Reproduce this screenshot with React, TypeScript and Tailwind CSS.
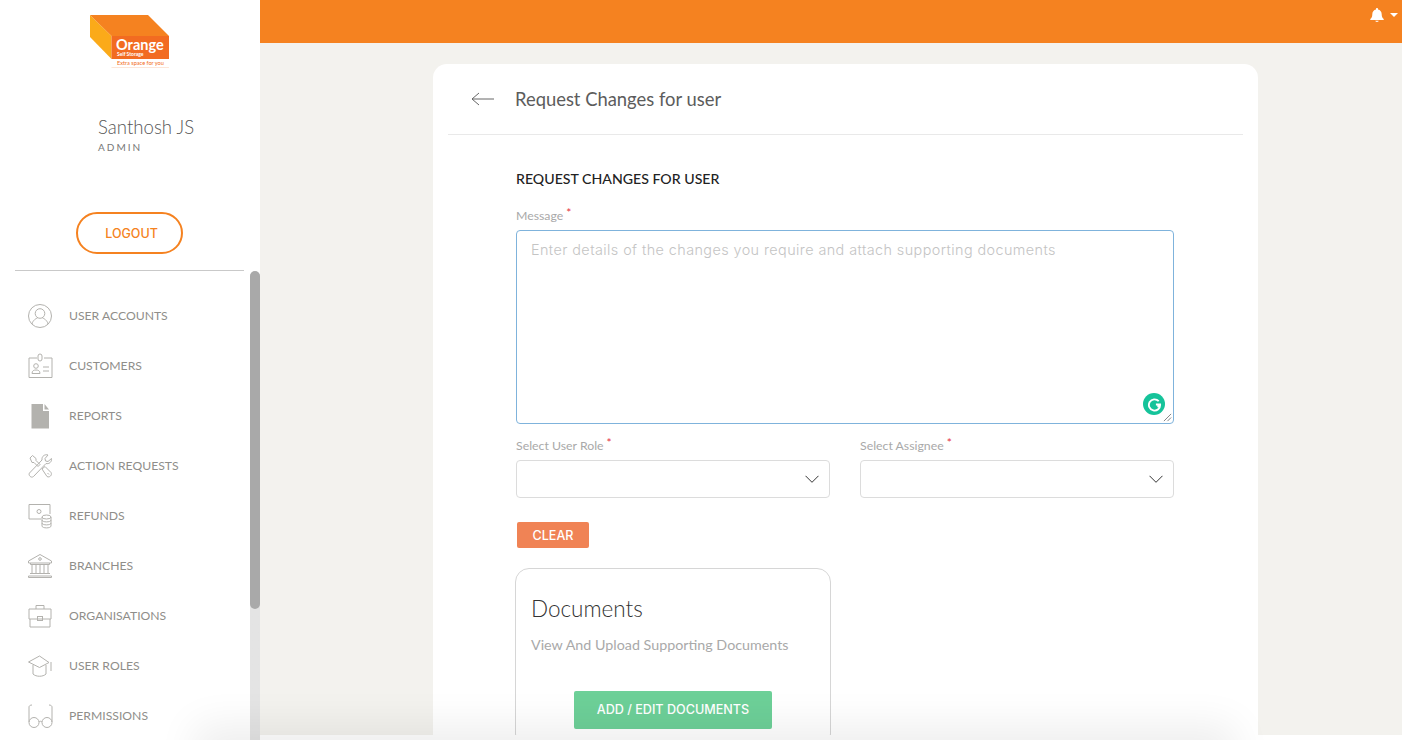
import type { ReactNode } from 'react';

const ICON = 'h-[26px] w-[26px] fill-none stroke-[#b3b2ae]';

const NAV: { label: string; icon: ReactNode }[] = [
  {
    label: 'USER ACCOUNTS',
    icon: (
      <svg viewBox="0 0 26 26" className={ICON} strokeWidth="1">
        <circle cx="13" cy="13" r="11.5" />
        <circle cx="13" cy="10.5" r="4.8" />
        <path d="M5 21c1-4 4-5.5 5.5-6M21 21c-1-4-4-5.500-5.500-6" />
      </svg>
    ),
  },
  {
    label: 'CUSTOMERS',
    icon: (
      <svg viewBox="0 0 26 26" className={ICON} strokeWidth="1">
        <path d="M10 5H2v19.500h23V5h-8" />
        <rect x="11" y="1" width="4" height="7" rx="2" />
        <circle cx="9" cy="13" r="2.300" />
        <path d="M5 20.500c0-3 2-3.500 4-3.500s4 .5 4 3.500zM16 14h6M16 18h6" />
      </svg>
    ),
  },
  {
    label: 'REPORTS',
    icon: (
      <svg viewBox="0 0 26 26" className="h-[26px] w-[26px] fill-[#b3b2ae]">
        <path d="M4.500 1H16v7h6v17.500H4.500zM17.500 1 22 6.500h-4.500z" />
      </svg>
    ),
  },
  {
    label: 'ACTION REQUESTS',
    icon: (
      <svg viewBox="0 0 26 26" className={ICON} strokeWidth="1">
        <path d="M3 5 5.500 2.500l3.500 3v2l4 4-2 2-4-4H5zM24.500 5.500l-3.500 3-2.500-.5-.5-2.500 3-3.500c-3-1-6.500 1-6 5L2.500 20c-1.500 2 1.500 5.500 4 3.500L19 10.500c3 .8 6-1.500 5.500-5z" />
        <path d="m15 16 3-2.500 6 6c1.500 2.500-1.500 5.500-4 4zM20.500 20l1.500 1.500" />
      </svg>
    ),
  },
  {
    label: 'REFUNDS',
    icon: (
      <svg viewBox="0 0 26 26" className={ICON} strokeWidth="1">
        <path d="M14 16H2V1.500h21V11" />
        <circle cx="12" cy="8.500" r="2" />
        <ellipse cx="19.500" cy="14" rx="4.500" ry="2" />
        <path d="M15 14v9c0 2.500 9 2.500 9 0v-9M15 17c0 2.500 9 2.500 9 0M15 20c0 2.500 9 2.500 9 0" />
      </svg>
    ),
  },
  {
    label: 'BRANCHES',
    icon: (
      <svg viewBox="0 0 26 26" className={ICON} strokeWidth="1">
        <path d="M13 1.500 1.500 8v2h23V8zM3.500 10v1.500h19V10M5 12v8M9 12v8M13 12v8M17 12v8M21 12v8M3 20.500h20M1.500 23h23v1.500h-23z" />
        <circle cx="13" cy="6" r="1.300" />
      </svg>
    ),
  },
  {
    label: 'ORGANISATIONS',
    icon: (
      <svg viewBox="0 0 26 26" className={ICON} strokeWidth="1">
        <path d="M9 6V2.500h8V6M2 6h22v10H2zM3 16v8h20v-8" />
        <rect x="10.500" y="13.500" width="5" height="4" />
      </svg>
    ),
  },
  {
    label: 'USER ROLES',
    icon: (
      <svg viewBox="0 0 26 26" className={ICON} strokeWidth="1">
        <path d="M12.500 3 1.500 9l11 5.500L22 9.500zM6 12v9c3 3 10 3 13 0v-9M24 9v9" />
      </svg>
    ),
  },
  {
    label: 'PERMISSIONS',
    icon: (
      <svg viewBox="0 0 26 26" className={ICON} strokeWidth="1">
        <circle cx="7" cy="19.500" r="5" />
        <circle cx="20" cy="19.500" r="5" />
        <path d="M12 19c1-1 2-1 3 0M2 19V4c0-1 1-2 3-2M25 19V4c0-1-1-2-3-2" />
      </svg>
    ),
  },
];

function Logo() {
  return (
    <svg viewBox="0 0 80 53" className="h-[53px] w-[80px]">
      <path d="M0 0 21.500 21v23L0 22z" fill="#fbaa19" />
      <path d="M0 0h58l21 21H21.500z" fill="#f58220" />
      <path d="M21.500 21H79v23H21.500z" fill="#f26b21" />
      <text x="26" y="35" fontFamily="Lato, sans-serif" fontWeight="700" fontSize="14.500" fill="#fff">Orange</text>
      <text x="27" y="41" fontFamily="Lato, sans-serif" fontWeight="700" fontSize="5" fill="#fff">Self Storage</text>
      <text x="27" y="50" fontFamily="Lato, sans-serif" fontSize="5.600" fill="#f26b21">Extra space for you</text>
      <path d="M21.500 52.500H79" stroke="#fbd5bd" strokeWidth="0.600" />
    </svg>
  );
}

function FieldLabel({ children }: { children: ReactNode }) {
  return (
    <div className="flex h-[16px] items-center text-[12.300px] leading-none text-[#a9a9a9]">
      {children}
      <span className="relative top-[-3px] ml-[3px] text-[12px] text-[#e5323e]">*</span>
    </div>
  );
}

function SelectBox({ label }: { label: string }) {
  return (
    <div className="w-[314px]">
      <FieldLabel>{label}</FieldLabel>
      <div className="mt-[6px] flex h-[38px] items-center justify-end rounded-[4px] border border-[#dcdcdc] bg-white pr-[10px]">
        <svg viewBox="0 0 14 8" className="h-[8px] w-[14px] fill-none stroke-[#333]" strokeWidth="1">
          <path d="m.5.8 6.500 6.500L13.500.8" />
        </svg>
      </div>
    </div>
  );
}

export default function App() {
  return (
    <div className="relative flex h-[740px] w-[1402px] overflow-hidden bg-white font-['Lato',sans-serif]">
      <aside className="flex h-full w-[260px] shrink-0 bg-white">
        <div className="w-[250px] shrink-0">
          <div className="pl-[90px] pt-[15px]">
            <Logo />
          </div>
          <div className="pl-[98px] pt-[48px]">
            <div className="text-[18.600px] font-light leading-[22px] text-[#555]">Santhosh JS</div>
            <div className="mt-[2px] text-[10px] leading-[14px] tracking-[0.2em] text-[#777]">ADMIN</div>
          </div>
          <div className="pl-[76px] pt-[58px]">
            <button className="h-[42px] w-[107px] rounded-full border-2 border-[#f58220] pl-[4px] pt-[2px] font-['Inter',sans-serif] text-[12.500px] font-medium text-[#f58220]">
              LOGOUT
            </button>
          </div>
          <div className="mx-[15px] mt-[16px] w-[229px] border-t border-[#c9c9c9]" />
          <nav className="pt-[20px]">
            {NAV.map((n) => (
              <div key={n.label} className="flex h-[50px] items-center pl-[27px]">
                {n.icon}
                <span className="ml-[16px] text-[12.200px] text-[#8f8e8a]">{n.label}</span>
              </div>
            ))}
          </nav>
        </div>
        <div className="h-full w-[10px] bg-gradient-to-b from-white from-[37%] to-[#e4e4e4] to-[37%]">
          <div className="mt-[271px] h-[338px] rounded-[5px] bg-[#a9a9a9]" />
        </div>
      </aside>

      <div className="min-w-0 flex-1">
        <div className="h-[735px] overflow-hidden bg-[#f3f2ee]">
          <header className="flex h-[43px] items-start justify-end bg-[#f58220] pr-[4px] pt-[8px]">
            <svg viewBox="0 0 14 14" className="h-[14px] w-[14px] fill-white">
              <path d="M7 0c.6 0 1 .4 1 1v.6c2.300.5 3.700 2.400 3.700 4.600 0 2.500.8 3.600 2 4.800v1H.300v-1c1.200-1.200 2-2.300 2-4.800C2.300 4 3.700 2.100 6 1.600V1c0-.6.4-1 1-1zM5.300 12.800h3.400C8.700 13.500 8 14 7 14s-1.700-.5-1.700-1.200z" />
            </svg>
            <span className="ml-[6px] mt-[5px] h-0 w-0 border-x-[4px] border-t-[4px] border-x-transparent border-t-white" />
          </header>

          <main className="flex justify-center pl-[29px] pt-[21px]">
            <section className="h-[700px] w-[825px] rounded-t-[14px] bg-white px-[15px]">
              <div className="flex h-[71px] items-center border-b border-[#e9e9e9] pl-[23px]">
                <svg viewBox="0 0 24 14" className="h-[14px] w-[24px] fill-none stroke-[#666]" strokeWidth="1">
                  <path d="M23 7H1M8 1 1 7l7 6" />
                </svg>
                <h1 className="ml-[20px] mt-[1px] text-[18.400px] text-[#5c5c5c]">Request Changes for user</h1>
              </div>

              <div className="pl-[68px] pr-[69px] pt-[34px]">
                <h2 className="text-[14.150px] font-medium leading-[20px] text-[#222]">REQUEST CHANGES FOR USER</h2>
                <div className="mt-[19px]">
                  <FieldLabel>Message</FieldLabel>
                </div>
                <div className="relative mt-[6px] h-[194px] rounded-[4px] border border-[#7fb3dc] bg-white px-[14px] pt-[10px] font-['Inter',sans-serif] text-[14.400px] font-light leading-[18px] tracking-[0.42px] text-[#c4c4c4]">
                  Enter details of the changes you require and attach supporting documents
                  <span className="absolute bottom-[8px] right-[8px] flex h-[22px] w-[22px] items-center justify-center rounded-full bg-[#15c39a]">
                    <svg viewBox="0 0 16 16" className="h-[15px] w-[15px] fill-none stroke-white" strokeWidth="2">
                      <path d="M12.500 4.500A6 6 0 1 0 14 8H9.500M12 8v3" />
                    </svg>
                  </span>
                  <svg viewBox="0 0 10 10" className="absolute bottom-[1px] right-[1px] h-[9px] w-[9px] stroke-[#555]" strokeWidth="0.800">
                    <path d="M1 9 9 1M5 9l4-4" />
                  </svg>
                </div>

                <div className="mt-[14px] flex justify-between">
                  <SelectBox label="Select User Role" />
                  <SelectBox label="Select Assignee" />
                </div>

                <button className="ml-[1px] mt-[24px] h-[26px] w-[72px] rounded-[2px] bg-[#f08355] pt-[2px] font-['Inter',sans-serif] text-[12.600px] font-medium text-white">
                  CLEAR
                </button>

                <div className="ml-[-1px] mt-[20px] h-[180px] w-[316px] rounded-[14px] border border-[#d6d6d6] px-[15px] pt-[27px]">
                  <div className="text-[22.500px] font-light leading-[26px] text-[#333]">Documents</div>
                  <div className="mt-[13px] text-[14.300px] leading-[20px] text-[#a9a9a9]">View And Upload Supporting Documents</div>
                  <button className="ml-[43px] mt-[36px] h-[38px] w-[198px] rounded-[2px] bg-[#6dd098] pt-[1px] font-['Inter',sans-serif] text-[12.600px] font-medium text-white">
                    ADD / EDIT DOCUMENTS
                  </button>
                </div>
              </div>
            </section>
          </main>
        </div>
      </div>

      <div className="pointer-events-none absolute left-[220px] top-[750px] h-[10px] w-[990px] shadow-[0_0_40px_25px_rgba(0,0,0,0.07)]" />
    </div>
  );
}
